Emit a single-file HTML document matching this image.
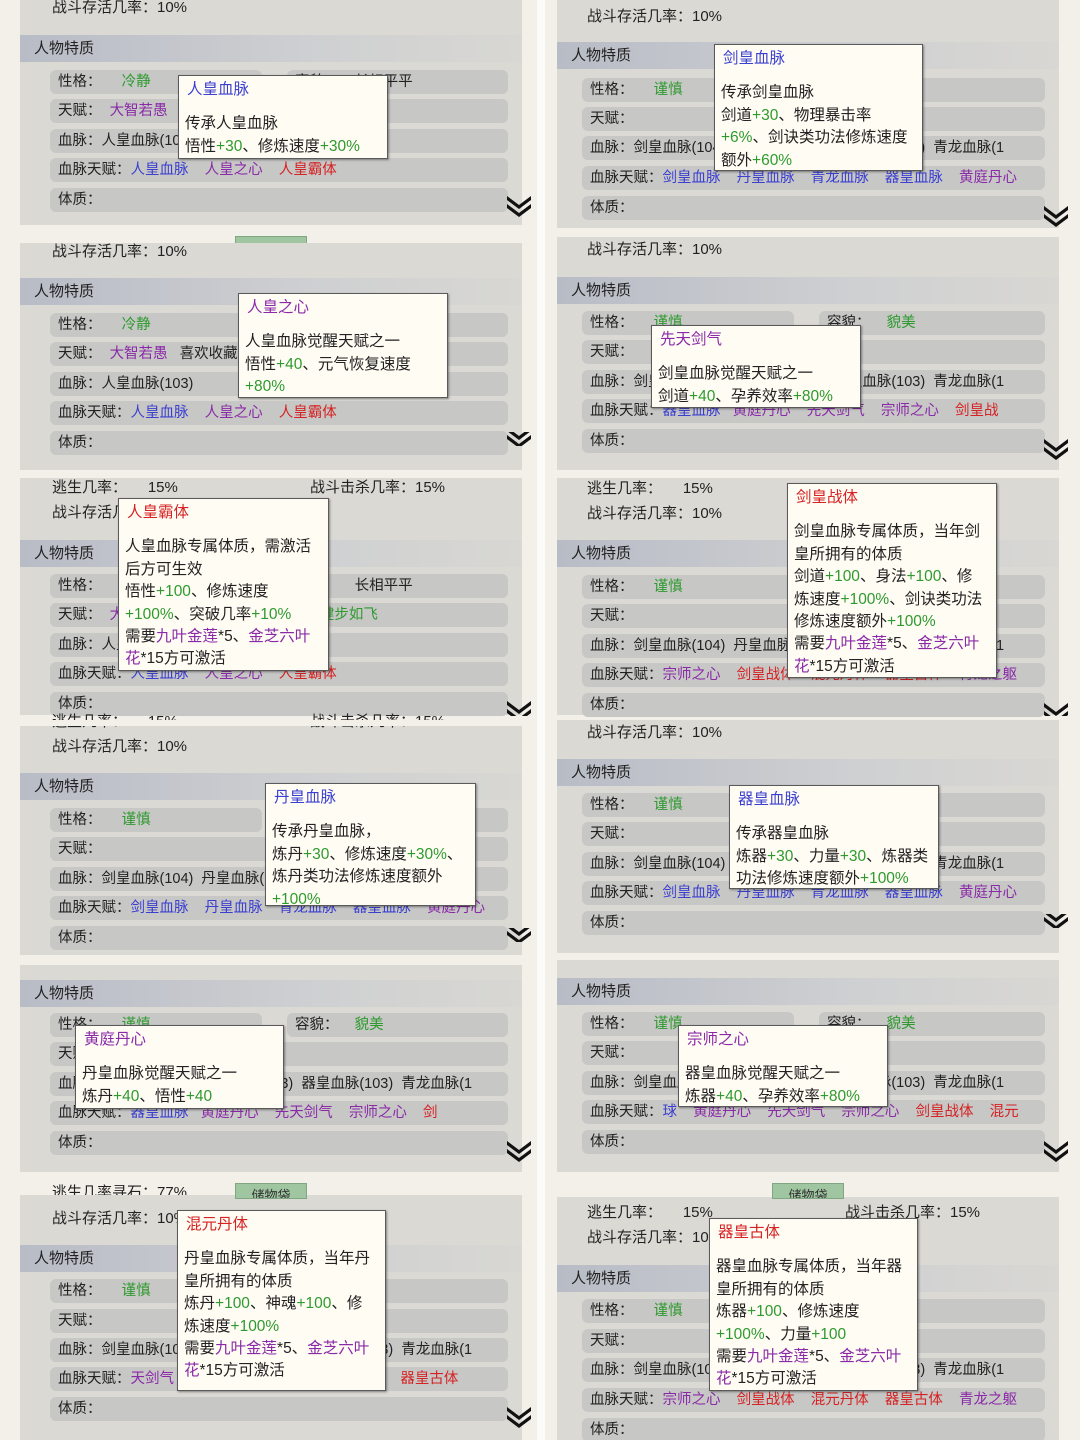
<!DOCTYPE html>
<html><head><meta charset="utf-8"><style>
*{margin:0;padding:0;box-sizing:border-box}
body{width:1080px;height:1440px;background:#f2f0e9;position:relative;overflow:hidden;font-family:"Liberation Sans","Noto Sans CJK SC",sans-serif;color:#222}
.c{position:absolute;top:0;width:540px;height:1440px;overflow:hidden}
#L{left:0}#R{left:545px;width:535px;box-shadow:-8px 0 0 #fbfbf9}
.pn{position:absolute;left:20px;width:502px;background:#dbd9d4}
#R .pn{left:12px}
.hd{position:absolute;left:20px;width:502px;height:27px;background:linear-gradient(90deg,#b8bcc6,#cfd0d2 60%,#d8d7d3);font-size:15px;line-height:27px;padding-left:14px}
#R .hd{left:12px;padding-left:14px}
.r{position:absolute;left:50px;width:458px;height:24px;background:#c7c7c6;border-radius:6px;line-height:24px;padding-left:8px;font-size:14.5px;white-space:nowrap;overflow:hidden}
#R .r{left:37px;width:463px}
.r.a{width:212px}#R .r.a{width:212px}
.r.b{left:287px;width:221px}#R .r.b{left:274px;width:226px}
.tx{position:absolute;left:52px;font-size:15px;line-height:20px;white-space:nowrap}
#R .tx{left:42px}
.tt{position:absolute;background:#fffcf4;border:1.5px solid #5a5a5a;box-shadow:1px 1px 2px rgba(0,0,0,.4);padding:3px 6px;font-size:15.5px;line-height:22.4px;white-space:nowrap;overflow:hidden;z-index:5}
.tt .t{margin-bottom:12px;margin-left:2px}
.g{color:#2e9a2e}.p{color:#8a2aa8}.bl{color:#3b3fd0}.rd{color:#d52222}
.tab{position:absolute;width:72px;height:16px;background:#9fc6a0;border:1px solid #7fa882;font-size:13px;text-align:center;line-height:24px;overflow:hidden;color:#333}
.ch{position:absolute;width:28px;height:26px;z-index:6}
</style></head><body>
<svg width="0" height="0" style="position:absolute"><defs><g id="cv"><path d="M2 3 L14 12 L26 3 L26 7 L14 16 L2 7Z" fill="#111"/><path d="M2 11 L14 20 L26 11 L26 15 L14 24 L2 15Z" fill="#111"/></g></defs></svg>

<div class="c" id="L">
<div class="pn" style="top:0;height:225px"></div>
<div class="tx" style="top:-2px">战斗存活几率：10%</div>
<div class="hd" style="top:35px">人物特质</div>
<div class="r a" style="top:70px">性格：&nbsp;&nbsp;&nbsp;&nbsp;&nbsp;<span class="g">冷静</span></div>
<div class="r b" style="top:70px">容貌：&nbsp;&nbsp;&nbsp;&nbsp;长相平平</div>
<div class="r" style="top:99px">天赋：&nbsp;&nbsp;<span class="p">大智若愚</span>&nbsp;&nbsp;&nbsp;喜欢收藏&nbsp;&nbsp;&nbsp;<span class="p">合纵连横</span>&nbsp;&nbsp;&nbsp;<span class="g">健步如飞</span></div>
<div class="r" style="top:129px">血脉：人皇血脉(103)</div>
<div class="r" style="top:158px">血脉天赋：<span class="bl">人皇血脉</span>&nbsp;&nbsp;&nbsp;&nbsp;<span class="p">人皇之心</span>&nbsp;&nbsp;&nbsp;&nbsp;<span class="rd">人皇霸体</span></div>
<div class="r" style="top:188px">体质：</div>
<svg class="ch" style="left:505px;top:193px"><use href="#cv"/></svg>
<div class="tt" style="left:178px;top:75px;width:210px;height:84px"><div class="t bl">人皇血脉</div>传承人皇血脉<br>悟性<span class="g">+30</span>、修炼速度<span class="g">+30%</span></div>
<div class="tab" style="left:235px;top:236px;height:8px"></div>
<div class="pn" style="top:243px;height:227px"></div>
<div class="tx" style="top:242px">战斗存活几率：10%</div>
<div class="hd" style="top:278px">人物特质</div>
<div class="r a" style="top:313px">性格：&nbsp;&nbsp;&nbsp;&nbsp;&nbsp;<span class="g">冷静</span></div>
<div class="r b" style="top:313px">容貌：&nbsp;&nbsp;&nbsp;&nbsp;长相平平</div>
<div class="r" style="top:342px">天赋：&nbsp;&nbsp;<span class="p">大智若愚</span>&nbsp;&nbsp;&nbsp;喜欢收藏&nbsp;&nbsp;&nbsp;<span class="p">合纵连横</span>&nbsp;&nbsp;&nbsp;<span class="g">健步如飞</span></div>
<div class="r" style="top:372px">血脉：人皇血脉(103)</div>
<div class="r" style="top:401px">血脉天赋：<span class="bl">人皇血脉</span>&nbsp;&nbsp;&nbsp;&nbsp;<span class="p">人皇之心</span>&nbsp;&nbsp;&nbsp;&nbsp;<span class="rd">人皇霸体</span></div>
<div class="r" style="top:431px">体质：</div>
<svg class="ch" style="left:505px;top:432px;height:14px;overflow:hidden"><use href="#cv" y="-8"/></svg>
<div class="tt" style="left:238px;top:293px;width:210px;height:105px"><div class="t p">人皇之心</div>人皇血脉觉醒天赋之一<br>悟性<span class="g">+40</span>、元气恢复速度<br><span class="g">+80%</span></div>
<div class="pn" style="top:478px;height:237px"></div>
<div class="tx" style="top:478px">逃生几率：&nbsp;&nbsp;&nbsp;&nbsp;&nbsp;15%</div>
<div class="tx" style="top:478px;left:310px">战斗击杀几率：15%</div>
<div class="tx" style="top:503px">战斗存活几率：10%</div>
<div class="hd" style="top:540px">人物特质</div>
<div class="r a" style="top:574px">性格：&nbsp;&nbsp;&nbsp;&nbsp;&nbsp;<span class="g">冷静</span></div>
<div class="r b" style="top:574px">容貌：&nbsp;&nbsp;&nbsp;&nbsp;长相平平</div>
<div class="r" style="top:603px">天赋：&nbsp;&nbsp;<span class="p">大智若愚</span>&nbsp;&nbsp;&nbsp;喜欢收藏&nbsp;&nbsp;&nbsp;<span class="p">合纵连横</span>&nbsp;&nbsp;&nbsp;<span class="g">健步如飞</span></div>
<div class="r" style="top:633px">血脉：人皇血脉(103)</div>
<div class="r" style="top:662px">血脉天赋：<span class="bl">人皇血脉</span>&nbsp;&nbsp;&nbsp;&nbsp;<span class="p">人皇之心</span>&nbsp;&nbsp;&nbsp;&nbsp;<span class="rd">人皇霸体</span></div>
<div class="r" style="top:692px">体质：</div>
<svg class="ch" style="left:505px;top:698px;height:18px;overflow:hidden"><use href="#cv"/></svg>
<div class="tt" style="left:118px;top:498px;width:211px;height:173px"><div class="t rd">人皇霸体</div>人皇血脉专属体质，需激活<br>后方可生效<br>悟性<span class="g">+100</span>、修炼速度<br><span class="g">+100%</span>、突破几率<span class="g">+10%</span><br>需要<span class="p">九叶金莲</span>*5、<span class="p">金芝六叶</span><br><span class="p">花</span>*15方可激活</div>
<div class="pn" style="top:722px;height:233px"></div>
<div class="tx" style="top:712px">逃生几率：&nbsp;&nbsp;&nbsp;&nbsp;&nbsp;15%</div>
<div class="tx" style="top:712px;left:310px">战斗击杀几率：15%</div>
<div class="pn" style="top:720px;height:6px;background:#f2f0e9"></div>
<div class="tx" style="top:737px">战斗存活几率：10%</div>
<div class="hd" style="top:773px">人物特质</div>
<div class="r a" style="top:808px">性格：&nbsp;&nbsp;&nbsp;&nbsp;&nbsp;<span class="g">谨慎</span></div>
<div class="r b" style="top:808px">容貌：&nbsp;&nbsp;&nbsp;&nbsp;<span class="g">貌美</span></div>
<div class="r" style="top:837px">天赋：</div>
<div class="r" style="top:867px">血脉：剑皇血脉(104)&nbsp;&nbsp;丹皇血脉(103)&nbsp;&nbsp;器皇血脉(103)&nbsp;&nbsp;青龙血脉(1</div>
<div class="r" style="top:896px">血脉天赋：<span class="bl">剑皇血脉</span>&nbsp;&nbsp;&nbsp;&nbsp;<span class="bl">丹皇血脉</span>&nbsp;&nbsp;&nbsp;&nbsp;<span class="bl">青龙血脉</span>&nbsp;&nbsp;&nbsp;&nbsp;<span class="bl">器皇血脉</span>&nbsp;&nbsp;&nbsp;&nbsp;<span class="p">黄庭丹心</span></div>
<div class="r" style="top:926px">体质：</div>
<svg class="ch" style="left:505px;top:928px;height:14px;overflow:hidden"><use href="#cv" y="-8"/></svg>
<div class="tt" style="left:265px;top:783px;width:211px;height:123px"><div class="t bl">丹皇血脉</div>传承丹皇血脉，<br>炼丹<span class="g">+30</span>、修炼速度<span class="g">+30%</span>、<br>炼丹类功法修炼速度额外<br><span class="g">+100%</span></div>
<div class="pn" style="top:965px;height:207px"></div>
<div class="hd" style="top:980px">人物特质</div>
<div class="r a" style="top:1013px">性格：&nbsp;&nbsp;&nbsp;&nbsp;&nbsp;<span class="g">谨慎</span></div>
<div class="r b" style="top:1013px">容貌：&nbsp;&nbsp;&nbsp;&nbsp;<span class="g">貌美</span></div>
<div class="r" style="top:1042px">天赋：</div>
<div class="r" style="top:1072px">血脉：剑皇血脉(104)&nbsp;&nbsp;丹皇血脉(103)&nbsp;&nbsp;器皇血脉(103)&nbsp;&nbsp;青龙血脉(1</div>
<div class="r" style="top:1101px">血脉天赋：<span class="bl">器皇血脉</span>&nbsp;&nbsp;&nbsp;<span class="p">黄庭丹心</span>&nbsp;&nbsp;&nbsp;&nbsp;<span class="p">先天剑气</span>&nbsp;&nbsp;&nbsp;&nbsp;<span class="p">宗师之心</span>&nbsp;&nbsp;&nbsp;&nbsp;<span class="rd">剑</span></div>
<div class="r" style="top:1131px">体质：</div>
<svg class="ch" style="left:505px;top:1138px"><use href="#cv"/></svg>
<div class="tt" style="left:75px;top:1025px;width:209px;height:84px"><div class="t p">黄庭丹心</div>丹皇血脉觉醒天赋之一<br>炼丹<span class="g">+40</span>、悟性<span class="g">+40</span></div>
<div class="pn" style="top:1195px;height:245px"></div>
<div class="tab" style="left:235px;top:1183px">储物袋</div>
<div class="tx" style="top:1183px;height:12px;overflow:hidden">逃生几率寻石：77%</div>
<div class="tx" style="top:1209px">战斗存活几率：10%</div>
<div class="hd" style="top:1245px">人物特质</div>
<div class="r a" style="top:1279px">性格：&nbsp;&nbsp;&nbsp;&nbsp;&nbsp;<span class="g">谨慎</span></div>
<div class="r b" style="top:1279px">容貌：&nbsp;&nbsp;&nbsp;&nbsp;<span class="g">貌美</span></div>
<div class="r" style="top:1309px">天赋：</div>
<div class="r" style="top:1338px">血脉：剑皇血脉(104)&nbsp;&nbsp;丹皇血脉(103)&nbsp;&nbsp;器皇血脉(103)&nbsp;&nbsp;青龙血脉(1</div>
<div class="r" style="top:1367px">血脉天赋：<span class="p">天剑气</span>&nbsp;&nbsp;&nbsp;<span class="p">宗师之心</span>&nbsp;&nbsp;&nbsp;<span class="rd">剑皇战体</span>&nbsp;&nbsp;&nbsp;<span class="rd">混元丹体</span>&nbsp;&nbsp;&nbsp;&nbsp;<span class="rd">器皇古体</span></div>
<div class="r" style="top:1397px">体质：</div>
<svg class="ch" style="left:505px;top:1404px"><use href="#cv"/></svg>
<div class="tt" style="left:177px;top:1210px;width:209px;height:181px"><div class="t rd">混元丹体</div>丹皇血脉专属体质，当年丹<br>皇所拥有的体质<br>炼丹<span class="g">+100</span>、神魂<span class="g">+100</span>、修<br>炼速度<span class="g">+100%</span><br>需要<span class="p">九叶金莲</span>*5、<span class="p">金芝六叶</span><br><span class="p">花</span>*15方可激活</div>
</div>

<div class="c" id="R">
<div class="pn" style="top:0;height:228px"></div>
<div class="tx" style="top:7px">战斗存活几率：10%</div>
<div class="hd" style="top:42px">人物特质</div>
<div class="r a" style="top:78px">性格：&nbsp;&nbsp;&nbsp;&nbsp;&nbsp;<span class="g">谨慎</span></div>
<div class="r b" style="top:78px">容貌：&nbsp;&nbsp;&nbsp;&nbsp;<span class="g">貌美</span></div>
<div class="r" style="top:107px">天赋：</div>
<div class="r" style="top:136px">血脉：剑皇血脉(104)&nbsp;&nbsp;丹皇血脉(103)&nbsp;&nbsp;器皇血脉(103)&nbsp;&nbsp;青龙血脉(1</div>
<div class="r" style="top:166px">血脉天赋：<span class="bl">剑皇血脉</span>&nbsp;&nbsp;&nbsp;&nbsp;<span class="bl">丹皇血脉</span>&nbsp;&nbsp;&nbsp;&nbsp;<span class="bl">青龙血脉</span>&nbsp;&nbsp;&nbsp;&nbsp;<span class="bl">器皇血脉</span>&nbsp;&nbsp;&nbsp;&nbsp;<span class="p">黄庭丹心</span></div>
<div class="r" style="top:196px">体质：</div>
<svg class="ch" style="left:497px;top:203px"><use href="#cv"/></svg>
<div class="tt" style="left:169px;top:44px;width:209px;height:127px"><div class="t bl">剑皇血脉</div>传承剑皇血脉<br>剑道<span class="g">+30</span>、物理暴击率<br><span class="g">+6%</span>、剑诀类功法修炼速度<br>额外<span class="g">+60%</span></div>
<div class="pn" style="top:237px;height:233px"></div>
<div class="tx" style="top:240px">战斗存活几率：10%</div>
<div class="hd" style="top:277px">人物特质</div>
<div class="r a" style="top:311px">性格：&nbsp;&nbsp;&nbsp;&nbsp;&nbsp;<span class="g">谨慎</span></div>
<div class="r b" style="top:311px">容貌：&nbsp;&nbsp;&nbsp;&nbsp;<span class="g">貌美</span></div>
<div class="r" style="top:340px">天赋：</div>
<div class="r" style="top:370px">血脉：剑皇血脉(104)&nbsp;&nbsp;丹皇血脉(103)&nbsp;&nbsp;器皇血脉(103)&nbsp;&nbsp;青龙血脉(1</div>
<div class="r" style="top:399px">血脉天赋：<span class="bl">器皇血脉</span>&nbsp;&nbsp;&nbsp;<span class="p">黄庭丹心</span>&nbsp;&nbsp;&nbsp;&nbsp;<span class="p">先天剑气</span>&nbsp;&nbsp;&nbsp;&nbsp;<span class="p">宗师之心</span>&nbsp;&nbsp;&nbsp;&nbsp;<span class="rd">剑皇战</span></div>
<div class="r" style="top:429px">体质：</div>
<svg class="ch" style="left:497px;top:436px"><use href="#cv"/></svg>
<div class="tt" style="left:106px;top:325px;width:210px;height:83px"><div class="t p">先天剑气</div>剑皇血脉觉醒天赋之一<br>剑道<span class="g">+40</span>、孕养效率<span class="g">+80%</span></div>
<div class="pn" style="top:478px;height:237px"></div>
<div class="tx" style="top:479px">逃生几率：&nbsp;&nbsp;&nbsp;&nbsp;&nbsp;15%</div>
<div class="tx" style="top:504px">战斗存活几率：10%</div>
<div class="hd" style="top:540px">人物特质</div>
<div class="r a" style="top:575px">性格：&nbsp;&nbsp;&nbsp;&nbsp;&nbsp;<span class="g">谨慎</span></div>
<div class="r b" style="top:575px">容貌：&nbsp;&nbsp;&nbsp;&nbsp;<span class="g">貌美</span></div>
<div class="r" style="top:604px">天赋：</div>
<div class="r" style="top:634px">血脉：剑皇血脉(104)&nbsp;&nbsp;丹皇血脉(103)&nbsp;&nbsp;器皇血脉(103)&nbsp;&nbsp;青龙血脉(1</div>
<div class="r" style="top:663px">血脉天赋：<span class="p">宗师之心</span>&nbsp;&nbsp;&nbsp;&nbsp;<span class="rd">剑皇战体</span>&nbsp;&nbsp;&nbsp;&nbsp;<span class="rd">混元丹体</span>&nbsp;&nbsp;&nbsp;&nbsp;<span class="rd">器皇古体</span>&nbsp;&nbsp;&nbsp;&nbsp;<span class="p">青龙之躯</span></div>
<div class="r" style="top:693px">体质：</div>
<svg class="ch" style="left:497px;top:700px;height:16px;overflow:hidden"><use href="#cv"/></svg>
<div class="tt" style="left:242px;top:483px;width:210px;height:195px"><div class="t rd">剑皇战体</div>剑皇血脉专属体质，当年剑<br>皇所拥有的体质<br>剑道<span class="g">+100</span>、身法<span class="g">+100</span>、修<br>炼速度<span class="g">+100%</span>、剑诀类功法<br>修炼速度额外<span class="g">+100%</span><br>需要<span class="p">九叶金莲</span>*5、<span class="p">金芝六叶</span><br><span class="p">花</span>*15方可激活</div>
<div class="pn" style="top:720px;height:233px"></div>
<div class="tx" style="top:723px">战斗存活几率：10%</div>
<div class="hd" style="top:759px">人物特质</div>
<div class="r a" style="top:793px">性格：&nbsp;&nbsp;&nbsp;&nbsp;&nbsp;<span class="g">谨慎</span></div>
<div class="r b" style="top:793px">容貌：&nbsp;&nbsp;&nbsp;&nbsp;<span class="g">貌美</span></div>
<div class="r" style="top:822px">天赋：</div>
<div class="r" style="top:852px">血脉：剑皇血脉(104)&nbsp;&nbsp;丹皇血脉(103)&nbsp;&nbsp;器皇血脉(103)&nbsp;&nbsp;青龙血脉(1</div>
<div class="r" style="top:881px">血脉天赋：<span class="bl">剑皇血脉</span>&nbsp;&nbsp;&nbsp;&nbsp;<span class="bl">丹皇血脉</span>&nbsp;&nbsp;&nbsp;&nbsp;<span class="bl">青龙血脉</span>&nbsp;&nbsp;&nbsp;&nbsp;<span class="bl">器皇血脉</span>&nbsp;&nbsp;&nbsp;&nbsp;<span class="p">黄庭丹心</span></div>
<div class="r" style="top:911px">体质：</div>
<svg class="ch" style="left:497px;top:914px;height:14px;overflow:hidden"><use href="#cv" y="-8"/></svg>
<div class="tt" style="left:184px;top:785px;width:210px;height:104px"><div class="t bl">器皇血脉</div>传承器皇血脉<br>炼器<span class="g">+30</span>、力量<span class="g">+30</span>、炼器类<br>功法修炼速度额外<span class="g">+100%</span></div>
<div class="pn" style="top:960px;height:212px"></div>
<div class="hd" style="top:978px">人物特质</div>
<div class="r a" style="top:1012px">性格：&nbsp;&nbsp;&nbsp;&nbsp;&nbsp;<span class="g">谨慎</span></div>
<div class="r b" style="top:1012px">容貌：&nbsp;&nbsp;&nbsp;&nbsp;<span class="g">貌美</span></div>
<div class="r" style="top:1041px">天赋：</div>
<div class="r" style="top:1071px">血脉：剑皇血脉(104)&nbsp;&nbsp;丹皇血脉(103)&nbsp;&nbsp;器皇血脉(103)&nbsp;&nbsp;青龙血脉(1</div>
<div class="r" style="top:1100px">血脉天赋：<span class="bl">球</span>&nbsp;&nbsp;&nbsp;&nbsp;<span class="p">黄庭丹心</span>&nbsp;&nbsp;&nbsp;&nbsp;<span class="p">先天剑气</span>&nbsp;&nbsp;&nbsp;&nbsp;<span class="p">宗师之心</span>&nbsp;&nbsp;&nbsp;&nbsp;<span class="rd">剑皇战体</span>&nbsp;&nbsp;&nbsp;&nbsp;<span class="rd">混元</span></div>
<div class="r" style="top:1130px">体质：</div>
<svg class="ch" style="left:497px;top:1138px"><use href="#cv"/></svg>
<div class="tt" style="left:133px;top:1025px;width:210px;height:82px"><div class="t p">宗师之心</div>器皇血脉觉醒天赋之一<br>炼器<span class="g">+40</span>、孕养效率<span class="g">+80%</span></div>
<div class="pn" style="top:1197px;height:243px"></div>
<div class="tab" style="left:227px;top:1183px">储物袋</div>
<div class="tx" style="top:1203px">逃生几率：&nbsp;&nbsp;&nbsp;&nbsp;&nbsp;15%</div>
<div class="tx" style="top:1203px;left:300px">战斗击杀几率：15%</div>
<div class="tx" style="top:1228px">战斗存活几率：10%</div>
<div class="hd" style="top:1265px">人物特质</div>
<div class="r a" style="top:1299px">性格：&nbsp;&nbsp;&nbsp;&nbsp;&nbsp;<span class="g">谨慎</span></div>
<div class="r b" style="top:1299px">容貌：&nbsp;&nbsp;&nbsp;&nbsp;<span class="g">貌美</span></div>
<div class="r" style="top:1329px">天赋：</div>
<div class="r" style="top:1358px">血脉：剑皇血脉(104)&nbsp;&nbsp;丹皇血脉(103)&nbsp;&nbsp;器皇血脉(103)&nbsp;&nbsp;青龙血脉(1</div>
<div class="r" style="top:1388px">血脉天赋：<span class="p">宗师之心</span>&nbsp;&nbsp;&nbsp;&nbsp;<span class="rd">剑皇战体</span>&nbsp;&nbsp;&nbsp;&nbsp;<span class="rd">混元丹体</span>&nbsp;&nbsp;&nbsp;&nbsp;<span class="rd">器皇古体</span>&nbsp;&nbsp;&nbsp;&nbsp;<span class="p">青龙之躯</span></div>
<div class="r" style="top:1418px">体质：</div>
<div class="tt" style="left:164px;top:1218px;width:209px;height:173px"><div class="t rd">器皇古体</div>器皇血脉专属体质，当年器<br>皇所拥有的体质<br>炼器<span class="g">+100</span>、修炼速度<br><span class="g">+100%</span>、力量<span class="g">+100</span><br>需要<span class="p">九叶金莲</span>*5、<span class="p">金芝六叶</span><br><span class="p">花</span>*15方可激活</div>
</div>
</body></html>
